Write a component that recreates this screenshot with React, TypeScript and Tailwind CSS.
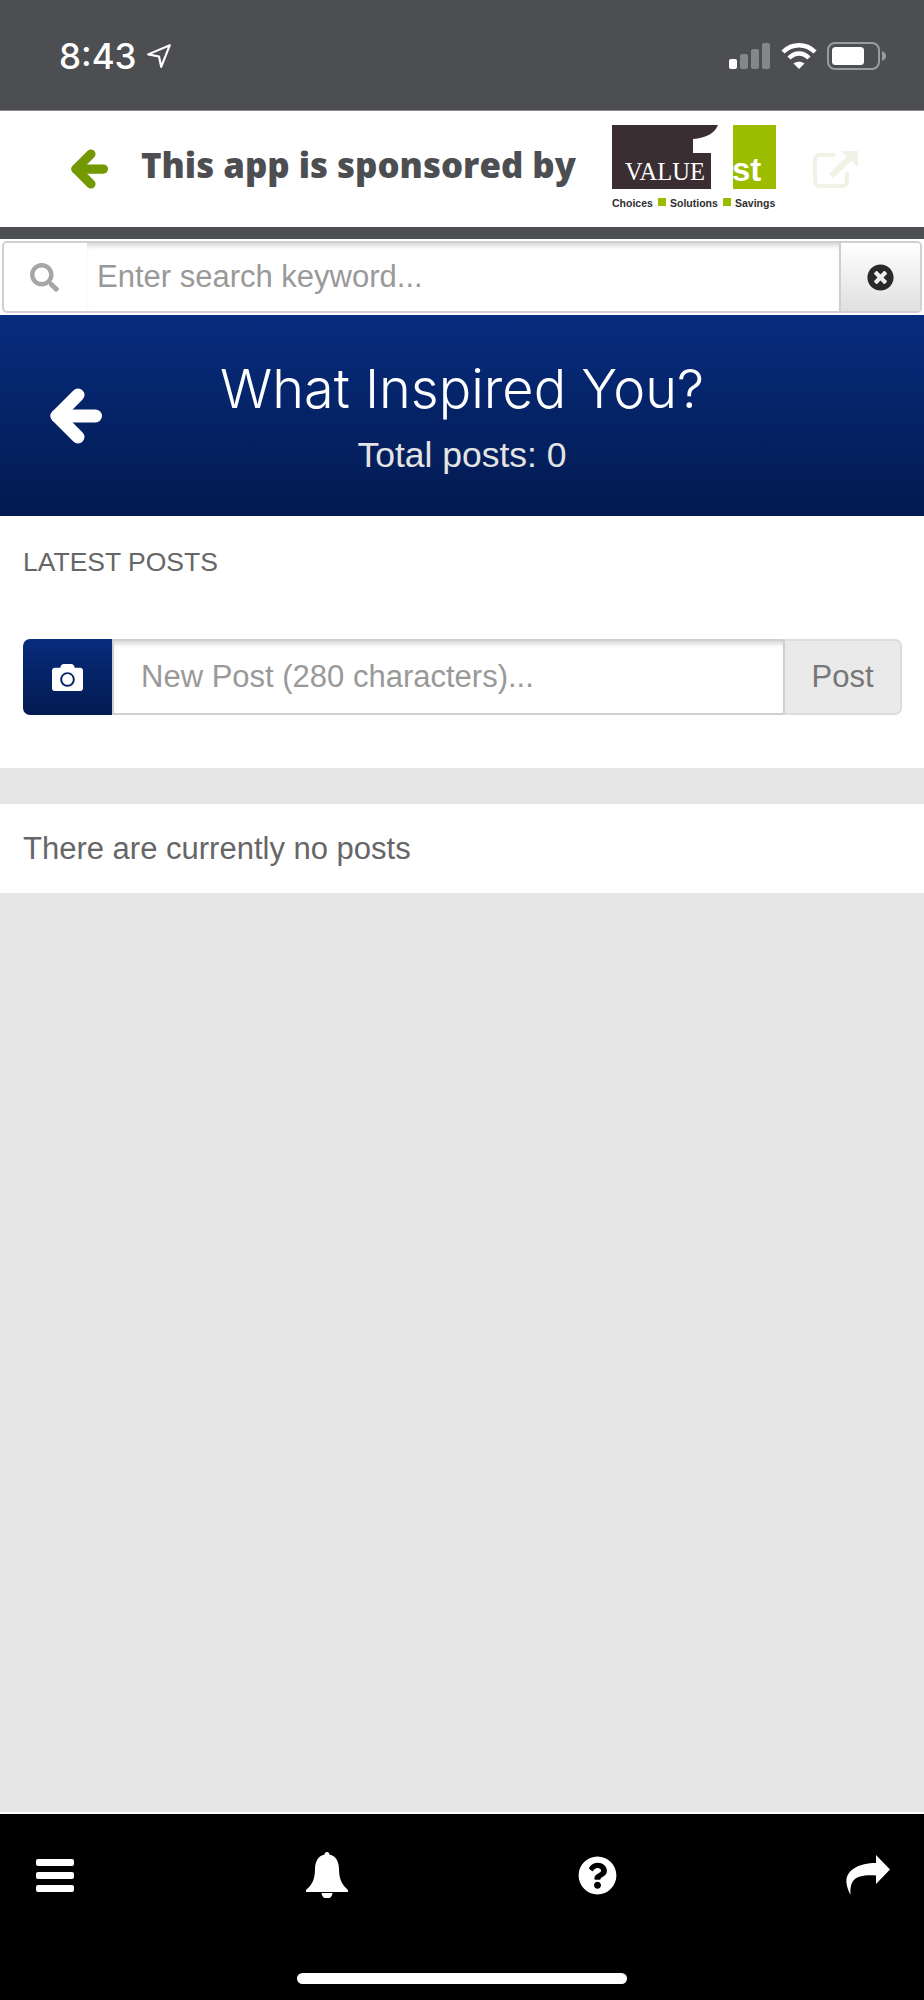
import { FaCamera, FaQuestionCircle, FaSearch, FaTimesCircle } from "react-icons/fa";

function ChunkyArrow({ className }: { className: string }) {
  return (
    <svg viewBox="0 0 52 56" fill="none" stroke="currentColor" strokeWidth="13" strokeLinecap="round" strokeLinejoin="round" className={className}>
      <path d="M7 28 H45.5" />
      <path d="M28 7 L7 28 L28 49" />
    </svg>
  );
}

function StatusIcons() {
  return (
    <div className="flex items-center gap-[10px]">
      <svg width="42" height="26" viewBox="0 0 42 26">
        <rect x="0" y="16" width="8" height="10" rx="2" fill="#ffffff" />
        <rect x="11" y="11" width="8" height="15" rx="2" fill="#85868a" />
        <rect x="22" y="6" width="8" height="20" rx="2" fill="#85868a" />
        <rect x="33" y="0" width="8" height="26" rx="2" fill="#85868a" />
      </svg>
      <svg width="36" height="28" viewBox="0 0 36 28" fill="none" stroke="#ffffff" strokeWidth="4.5">
        <path d="M2 10 C11 1 25 1 34 10" />
        <path d="M8 16 C14 10 22 10 28 16" />
        <path d="M18 27 L12.5 21.5 C15.5 19 20.5 19 23.5 21.5 Z" fill="#ffffff" stroke="none" />
      </svg>
      <svg width="59" height="28" viewBox="0 0 59 28">
        <rect x="1" y="1" width="51" height="26" rx="7" fill="none" stroke="#9a9b9e" strokeWidth="2" />
        <rect x="5" y="5" width="32" height="18" rx="3.5" fill="#ffffff" />
        <path d="M55 9 C58 10 59 12 59 14 C59 16 58 18 55 19 Z" fill="#9a9b9e" />
      </svg>
    </div>
  );
}

function SponsorLogo() {
  return (
    <svg width="166" height="86" viewBox="0 0 166 86" className="shrink-0">
      <path d="M0 0 H106 C103 8 94 13 81 14 V28 H99 V64 H0 Z" fill="#3a2e33" />
      <text x="13" y="55" fill="#ffffff" fontFamily="'Liberation Serif', serif" fontSize="24.5">VALUE</text>
      <rect x="121" y="0" width="43" height="64" fill="#9cbc00" />
      <text x="120" y="56" fill="#ffffff" fontFamily="'Liberation Sans', sans-serif" fontSize="33" fontWeight="700">st</text>
      <text x="0" y="82" fill="#2e2e2e" fontFamily="'Liberation Sans', sans-serif" fontSize="10.5" fontWeight="700">Choices</text>
      <rect x="46" y="73" width="8" height="8" fill="#9cbc00" />
      <text x="58" y="82" fill="#2e2e2e" fontFamily="'Liberation Sans', sans-serif" fontSize="10.5" fontWeight="700">Solutions</text>
      <rect x="111" y="73" width="8" height="8" fill="#9cbc00" />
      <text x="123" y="82" fill="#2e2e2e" fontFamily="'Liberation Sans', sans-serif" fontSize="10.5" fontWeight="700">Savings</text>
    </svg>
  );
}

function ExternalLink() {
  return (
    <svg width="46" height="38" viewBox="0 0 46 38" fill="none" stroke="#eff3e6" strokeWidth="4">
      <path d="M34 22 V31 C34 34 32 36 29 36 H7 C4 36 2 34 2 31 V10 C2 7 4 5 7 5 H22" />
      <path d="M18 26 L40 5" strokeWidth="6" />
      <path d="M28 1 H45 V17 Z" fill="#eff3e6" stroke="none" />
    </svg>
  );
}

export default function App() {
  return (
    <div className="flex h-[2000px] w-full flex-col bg-[#e6e6e6] font-['Liberation_Sans',sans-serif]">
      <div className="flex h-[110px] shrink-0 items-center justify-between bg-[#4d4e52] pl-[59px] pr-[38px] pt-[2px] text-white">
        <div className="flex items-center gap-[9px]">
          <span className="font-['Inter',sans-serif] text-[35px] font-medium leading-none">8:43</span>
          <svg width="26" height="26" viewBox="0 0 24 24" fill="none" stroke="#ffffff" strokeWidth="2" strokeLinejoin="round">
            <path d="M22 2 L2 10.5 L12 12.5 L14 22 Z" />
          </svg>
        </div>
        <StatusIcons />
      </div>

      <div className="flex h-[117px] shrink-0 items-center border-t border-[#8a8a8a] bg-white pl-[71px]">
        <ChunkyArrow className="h-[40px] w-[37px] text-[#749800]" />
        <span className="mb-[8px] ml-[33px] font-['Open_Sans',sans-serif] text-[34.8px] font-extrabold leading-none text-[#4d4e52]">This app is sponsored by</span>
        <div className="mb-[2px] ml-[36px]">
          <SponsorLogo />
        </div>
        <div className="ml-[35px]">
          <ExternalLink />
        </div>
      </div>

      <div className="h-[12px] shrink-0 bg-[#4d4e52]" />

      <div className="flex h-[76px] shrink-0 bg-white p-[2px]">
        <div className="flex flex-1 overflow-hidden rounded-[5px] border-2 border-[#d0d0d0] bg-white">
          <div className="flex w-[83px] items-center justify-center pr-[2px] pt-[1px]">
            <FaSearch className="h-[29px] w-[29px] text-[#a6a6a6]" />
          </div>
          <input
            placeholder="Enter search keyword..."
            className="min-w-0 flex-1 bg-white pl-[10px] pt-[1px] text-[31px] text-[#555555] shadow-[inset_0_5px_4px_-2px_#d8d8d8] outline-none placeholder:text-[#999999]"
          />
          <div className="flex w-[81px] items-center justify-center border-l-2 border-[#cfcfcf] bg-gradient-to-b from-white to-[#e0e0e0]">
            <FaTimesCircle className="h-[27px] w-[27px] text-[#2a2a2a]" />
          </div>
        </div>
      </div>

      <div className="grid h-[201px] shrink-0 grid-cols-[1fr_auto_1fr] items-center bg-gradient-to-b from-[#082c7e] to-[#021a50] text-white">
        <div className="pl-[50px]">
          <ChunkyArrow className="h-[56px] w-[52px]" />
        </div>
        <div className="flex flex-col items-center">
          <h1 className="mt-[4px] font-['Inter',sans-serif] text-[54px] font-light leading-none">What Inspired You?</h1>
          <p className="mt-[22px] text-[35.5px] leading-none text-[#e4e4e4]">Total posts: 0</p>
        </div>
        <div />
      </div>

      <div className="flex h-[252px] shrink-0 flex-col bg-white px-[23px] pt-[33px]">
        <h2 className="text-[26.5px] leading-none text-[#666666]">LATEST POSTS</h2>
        <div className="mr-[-1px] mt-[63.5px] flex h-[76px]">
          <div className="flex w-[89px] items-center justify-center rounded-l-[7px] bg-gradient-to-b from-[#082c7e] to-[#021a50]">
            <FaCamera className="h-[31px] w-[33px] text-white" />
          </div>
          <input
            placeholder="New Post (280 characters)..."
            className="min-w-0 flex-1 border-b-2 border-l-2 border-t-2 border-[#cfcfcf] bg-white pl-[27px] text-[31px] text-[#555555] shadow-[inset_0_5px_4px_-2px_#d8d8d8] outline-none placeholder:text-[#999999]"
          />
          <div className="flex w-[119px] items-center justify-center rounded-r-[7px] border-2 border-l-[#cfcfcf] border-y-[#dddddd] border-r-[#dddddd] bg-[#eaeaea] text-[31px] text-[#777777]">Post</div>
        </div>
      </div>

      <div className="mt-[36px] flex h-[89px] shrink-0 items-center bg-white px-[23px] pt-[1px] text-[31px] text-[#666666]">There are currently no posts</div>

      <div className="flex-1 border-b-2 border-white" />

      <div className="flex h-[186px] shrink-0 flex-col bg-black">
        <div className="flex items-center justify-between pl-[36px] pr-[34px] pt-[38px] text-white">
          <svg width="38" height="33" viewBox="0 0 38 33" fill="#ffffff">
            <rect x="0" y="0" width="38" height="7" rx="2" />
            <rect x="0" y="13" width="38" height="7" rx="2" />
            <rect x="0" y="26" width="38" height="7" rx="2" />
          </svg>
          <svg width="42" height="46" viewBox="0 0 42 46" fill="#ffffff" className="ml-[3px]">
            <path d="M21 0 c1.6 0 2.4 1 2.4 2.6 C30 4 33 10 33 17 c0 10 3 16 9 21 q1 2 -1 2 H1 q-2 0 -1 -2 c6 -5 9 -11 9 -21 C9 10 12 4 18.6 2.6 C18.6 1 19.4 0 21 0 Z" />
            <path d="M15.5 41 a5.5 5.5 0 0 0 11 0 Z" />
          </svg>
          <FaQuestionCircle className="h-[39px] w-[39px]" />
          <svg width="44" height="41" viewBox="0 0 44 41" fill="#ffffff">
            <path d="M44 14.5 L30 0 V8 C12 8 -1 16 0.5 28 C1 33 3 37 4.5 40 C4 32 5 24 14 21.5 C19 20 25 20 30 20.5 V29 Z" />
          </svg>
        </div>
        <div className="mx-auto mt-[75px] h-[11px] w-[330px] rounded-full bg-white" />
      </div>
    </div>
  );
}
